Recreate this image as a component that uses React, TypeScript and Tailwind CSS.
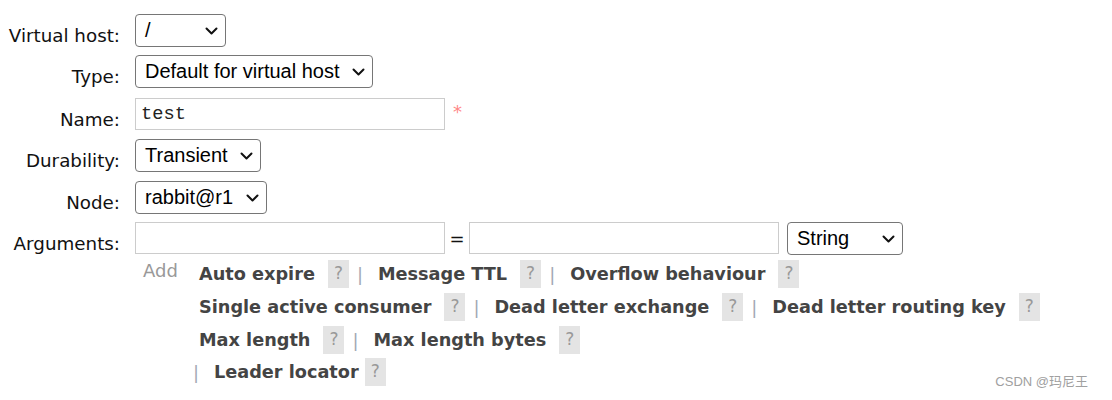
import React from 'react';

const labelCls = "w-[120px] shrink-0 pt-[11px] text-right text-[18.3px] leading-[21px] text-[#111]";

function Chevron() {
    return (
        <svg width="13" height="8" viewBox="0 0 13 8" className="shrink-0">
            <polyline points="1.5,1.5 6.5,6.5 11.5,1.5" fill="none" stroke="#111" strokeWidth="2" strokeLinecap="round" strokeLinejoin="round"/>
        </svg>
    );
}

function Select({value, width}: { value: string, width: string }) {
    return (
        <div className={`${width} flex h-[33px] shrink-0 items-center justify-between rounded-[4px] border border-[#767676] bg-white pl-[9px] pr-[7px] font-['Liberation_Sans',Arial,sans-serif] text-[20px] leading-[23px] text-black`}>
            <span>{value}</span>
            <Chevron/>
        </div>
    );
}

function TextInput({value}: { value?: string }) {
    return (
        <div className="flex h-[32px] w-[310px] shrink-0 items-center border border-[#cccccc] bg-white pl-[5px] font-['Liberation_Mono','Courier_New',monospace] text-[18.7px] text-[#222]">
            {value}
        </div>
    );
}

function Row({label, className, children}: { label: string, className?: string, children: React.ReactNode }) {
    return (
        <div className={`flex items-start ${className ?? ''}`}>
            <div className={labelCls}>{label}</div>
            <div className="ml-[15px] flex items-start">{children}</div>
        </div>
    );
}

function Help({className}: { className?: string }) {
    return (
        <span className={`${className ?? 'ml-[13px]'} flex h-[28px] w-[21px] shrink-0 items-center justify-center bg-[#e4e4e4] text-[17px] text-[#999]`}>?</span>
    );
}

function Sep() {
    return <span className="ml-[8px] mr-[15px] w-[6px] text-center text-[18px] text-[#a3a9b5]">|</span>;
}

function Link({children}: { children: React.ReactNode }) {
    return <span className="whitespace-nowrap text-[17.7px] font-bold text-[#444]">{children}</span>;
}

function LinkRow({items, className}: { items: string[], className?: string }) {
    return (
        <div className={`flex h-[28px] items-center ${className ?? ''}`}>
            {items.map((item, i) => (
                <React.Fragment key={item}>
                    {i > 0 && <Sep/>}
                    <Link>{item}</Link>
                    <Help/>
                </React.Fragment>
            ))}
        </div>
    );
}

export default function App() {
    return (
        <div className="relative h-[400px] w-full overflow-hidden bg-white pt-[14px] font-['DejaVu_Sans',Verdana,sans-serif]">
            <Row label="Virtual host:">
                <Select value="/" width="w-[91px]"/>
            </Row>
            <Row label="Type:" className="mt-[8px]">
                <Select value="Default for virtual host" width="w-[238px]"/>
            </Row>
            <Row label="Name:" className="mt-[10px]">
                <TextInput value="test"/>
                <span className="ml-[8px] mt-[3px] text-[18px] leading-[21px] text-[#f88]">*</span>
            </Row>
            <Row label="Durability:" className="mt-[9px]">
                <Select value="Transient" width="w-[126px]"/>
            </Row>
            <Row label="Node:" className="mt-[9px]">
                <Select value="rabbit@r1" width="w-[132px]"/>
            </Row>
            <Row label="Arguments:" className="mt-[8px]">
                <TextInput/>
                <span className="flex h-[32px] w-[24px] items-center justify-center text-[18px] text-[#111]">=</span>
                <TextInput/>
                <div className="ml-[8px]">
                    <Select value="String" width="w-[116px]"/>
                </div>
            </Row>

            <div className="ml-[143px] mt-[5px] flex items-start">
                <span className="w-[56px] shrink-0 text-[18px] leading-[21px] text-[#999]">Add</span>
                <div className="flex flex-col">
                    <LinkRow items={['Auto expire', 'Message TTL', 'Overflow behaviour']}/>
                    <LinkRow className="mt-[5px]" items={['Single active consumer', 'Dead letter exchange', 'Dead letter routing key']}/>
                    <LinkRow className="mt-[5px]" items={['Max length', 'Max length bytes']}/>
                    <div className="mt-[4px] flex h-[28px] items-center">
                        <span className="-ml-[6px] mr-[15px] w-[6px] text-center text-[18px] text-[#a3a9b5]">|</span>
                        <Link>Leader locator</Link>
                        <Help className="ml-[6px]"/>
                    </div>
                </div>
            </div>

            <div className="absolute right-[24px] top-[373px] font-['Liberation_Sans','Noto_Sans_CJK_SC',sans-serif] text-[13px] leading-[18px] text-[#a0a0a0]">
                CSDN @玛尼王
            </div>
        </div>
    );
}
